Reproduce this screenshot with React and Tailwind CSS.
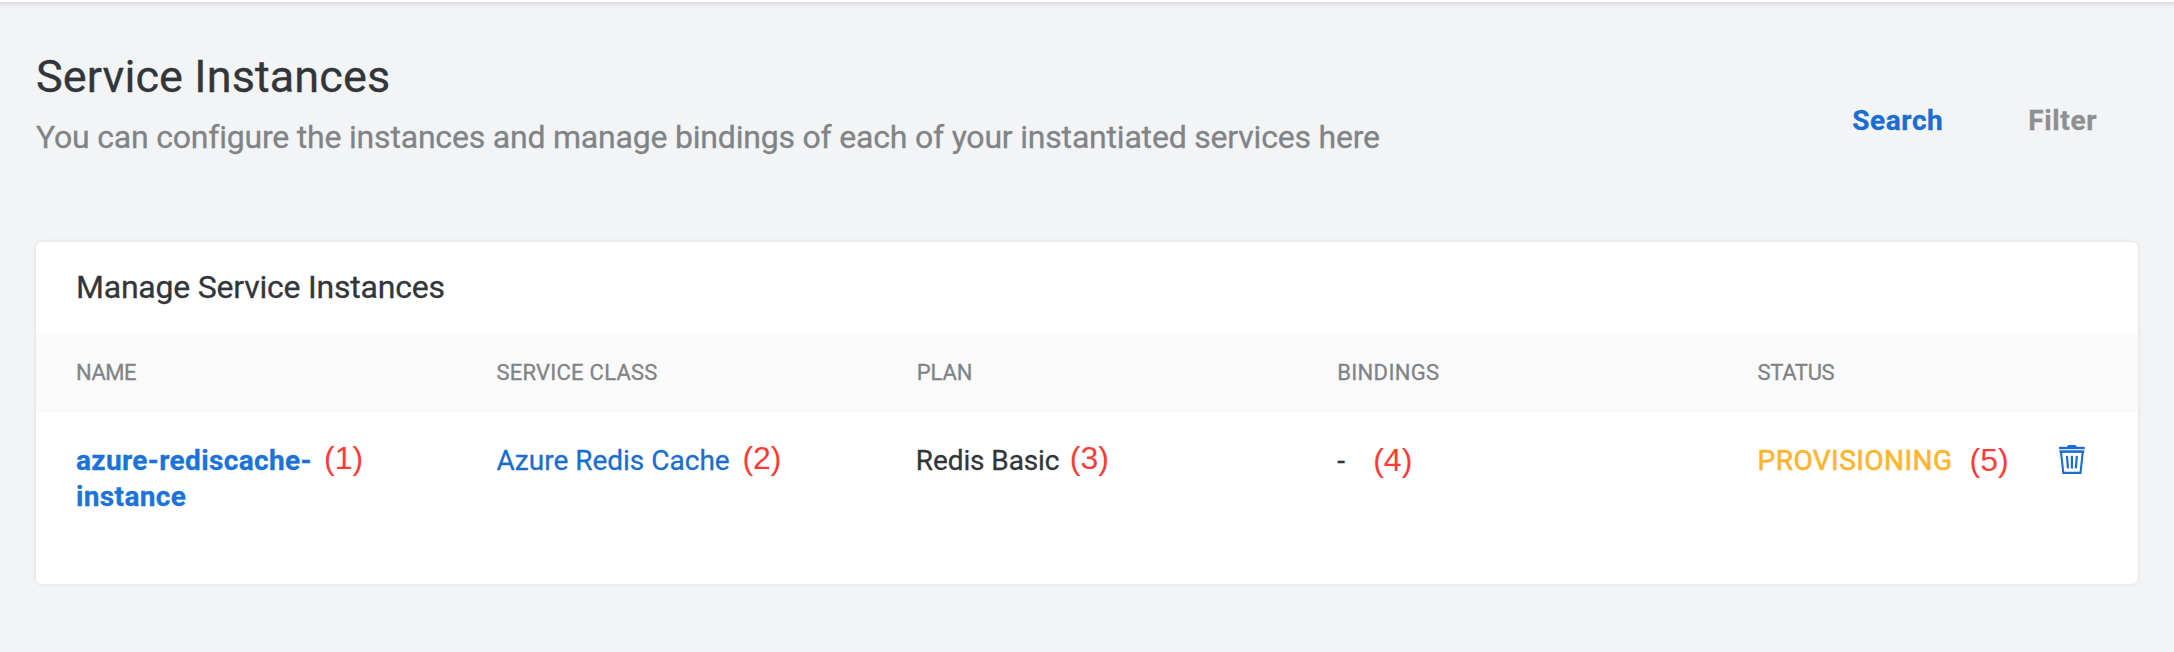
const columns = ["NAME", "SERVICE CLASS", "PLAN", "BINDINGS", "STATUS"];
const headTracking = [
  "tracking-[-0.5px]",
  "tracking-[0.25px]",
  "tracking-[-0.1px]",
  "tracking-[0.35px]",
  "tracking-[-0.35px]",
];

function Marker({ children, className = "" }) {
  return (
    <span className={`shrink-0 font-['Liberation_Sans',sans-serif] text-[32px] leading-9 font-normal text-[#ff3b37] [-webkit-text-stroke:0px] ${className}`}>
      {children}
    </span>
  );
}

function TrashIcon() {
  return (
    <svg width="26" height="30" viewBox="0 0 26 30" fill="none" aria-hidden="true">
      <path d="M8 2C8.4 .6 9.4 0 10.6 0h4.6c1.2 0 2.2.6 2.6 2z" fill="#1b6dd0" />
      <path d="M0 1.8h25.8v2.4H0z" fill="#1b6dd0" />
      <path d="M1.9 6.6h21.9L21.5 27.9H4.3z" stroke="#1b6dd0" strokeWidth="2.1" />
      <path d="M.4 5.5h25v2.1H.4z" fill="#1b6dd0" opacity=".8" />
      <path d="M7.9 10.8l1.1 12.6M12.9 10.8v12.6M17.9 10.8l-1.1 12.6" stroke="#1b6dd0" strokeWidth="2.2" />
    </svg>
  );
}

export default function App() {
  return (
    <div className="flex h-[652px] flex-col bg-[#f3f4f6] font-['Roboto',sans-serif] text-[#32363a] [-webkit-text-stroke:0.3px]">
      <div className="h-[2px] shrink-0 bg-white" />
      <div className="h-[6px] shrink-0 bg-linear-to-b from-[#d9dbde] to-[#f3f4f6]" />

      <header className="flex h-[234px] shrink-0 items-start justify-between pr-[77px] pl-9">
        <div className="pt-[42px]">
          <h1 className="text-[45px] leading-[54px] tracking-[0.1px]">Service Instances</h1>
          <p className="mt-[13px] text-[32px] leading-10 tracking-[-0.2px] text-[#808487]">
            You can configure the instances and manage bindings of each of your instantiated services here
          </p>
        </div>
        <nav className="flex gap-[85px] pt-[95px] text-[28px] leading-9 font-bold">
          <a className="tracking-[0.6px] text-[#1b6dd0]">Search</a>
          <a className="tracking-[0.6px] text-[#8d8f93]">Filter</a>
        </nav>
      </header>

      <section className="mx-9 h-[342px] shrink-0 rounded-md bg-white shadow-[0_0_4px_rgba(0,0,0,0.1)]">
        <h2 className="h-[92px] pt-[25px] pl-10 text-[32px] leading-10 tracking-[-0.22px]">
          Manage Service Instances
        </h2>
        <div className="grid h-[78px] grid-cols-5 items-center bg-[#fafafa] text-[22px] leading-[30px] text-[#808487]">
          {columns.map((name, i) => (
            <div key={name} className={`pl-10 ${headTracking[i]}`}>
              {name}
            </div>
          ))}
        </div>
        <div className="grid grid-cols-5 pt-[31px] text-[28px] leading-9">
          <div className="flex items-start pl-10">
            <a className="w-[248px] font-bold tracking-[0.36px] text-[#1b73da]">azure-rediscache-instance</a>
            <Marker className="-mt-[3px]">(1)</Marker>
          </div>
          <div className="flex items-start pl-10">
            <a className="w-[246px] text-[#1b6dd0]">Azure Redis Cache</a>
            <Marker className="-mt-[3px]">(2)</Marker>
          </div>
          <div className="flex items-start pl-[39px]">
            <span className="w-[154px] tracking-[-0.1px]">Redis Basic</span>
            <Marker className="-mt-[3px]">(3)</Marker>
          </div>
          <div className="flex items-start pl-10">
            <span className="w-9">-</span>
            <Marker className="-mt-px">(4)</Marker>
          </div>
          <div className="flex items-start pl-10">
            <span className="w-[212px] tracking-[0.45px] text-[#ffb42f] [-webkit-text-stroke:0.6px]">PROVISIONING</span>
            <Marker className="-mt-px">(5)</Marker>
            <span className="mt-[2px] ml-[50px]">
              <TrashIcon />
            </span>
          </div>
        </div>
      </section>
    </div>
  );
}
